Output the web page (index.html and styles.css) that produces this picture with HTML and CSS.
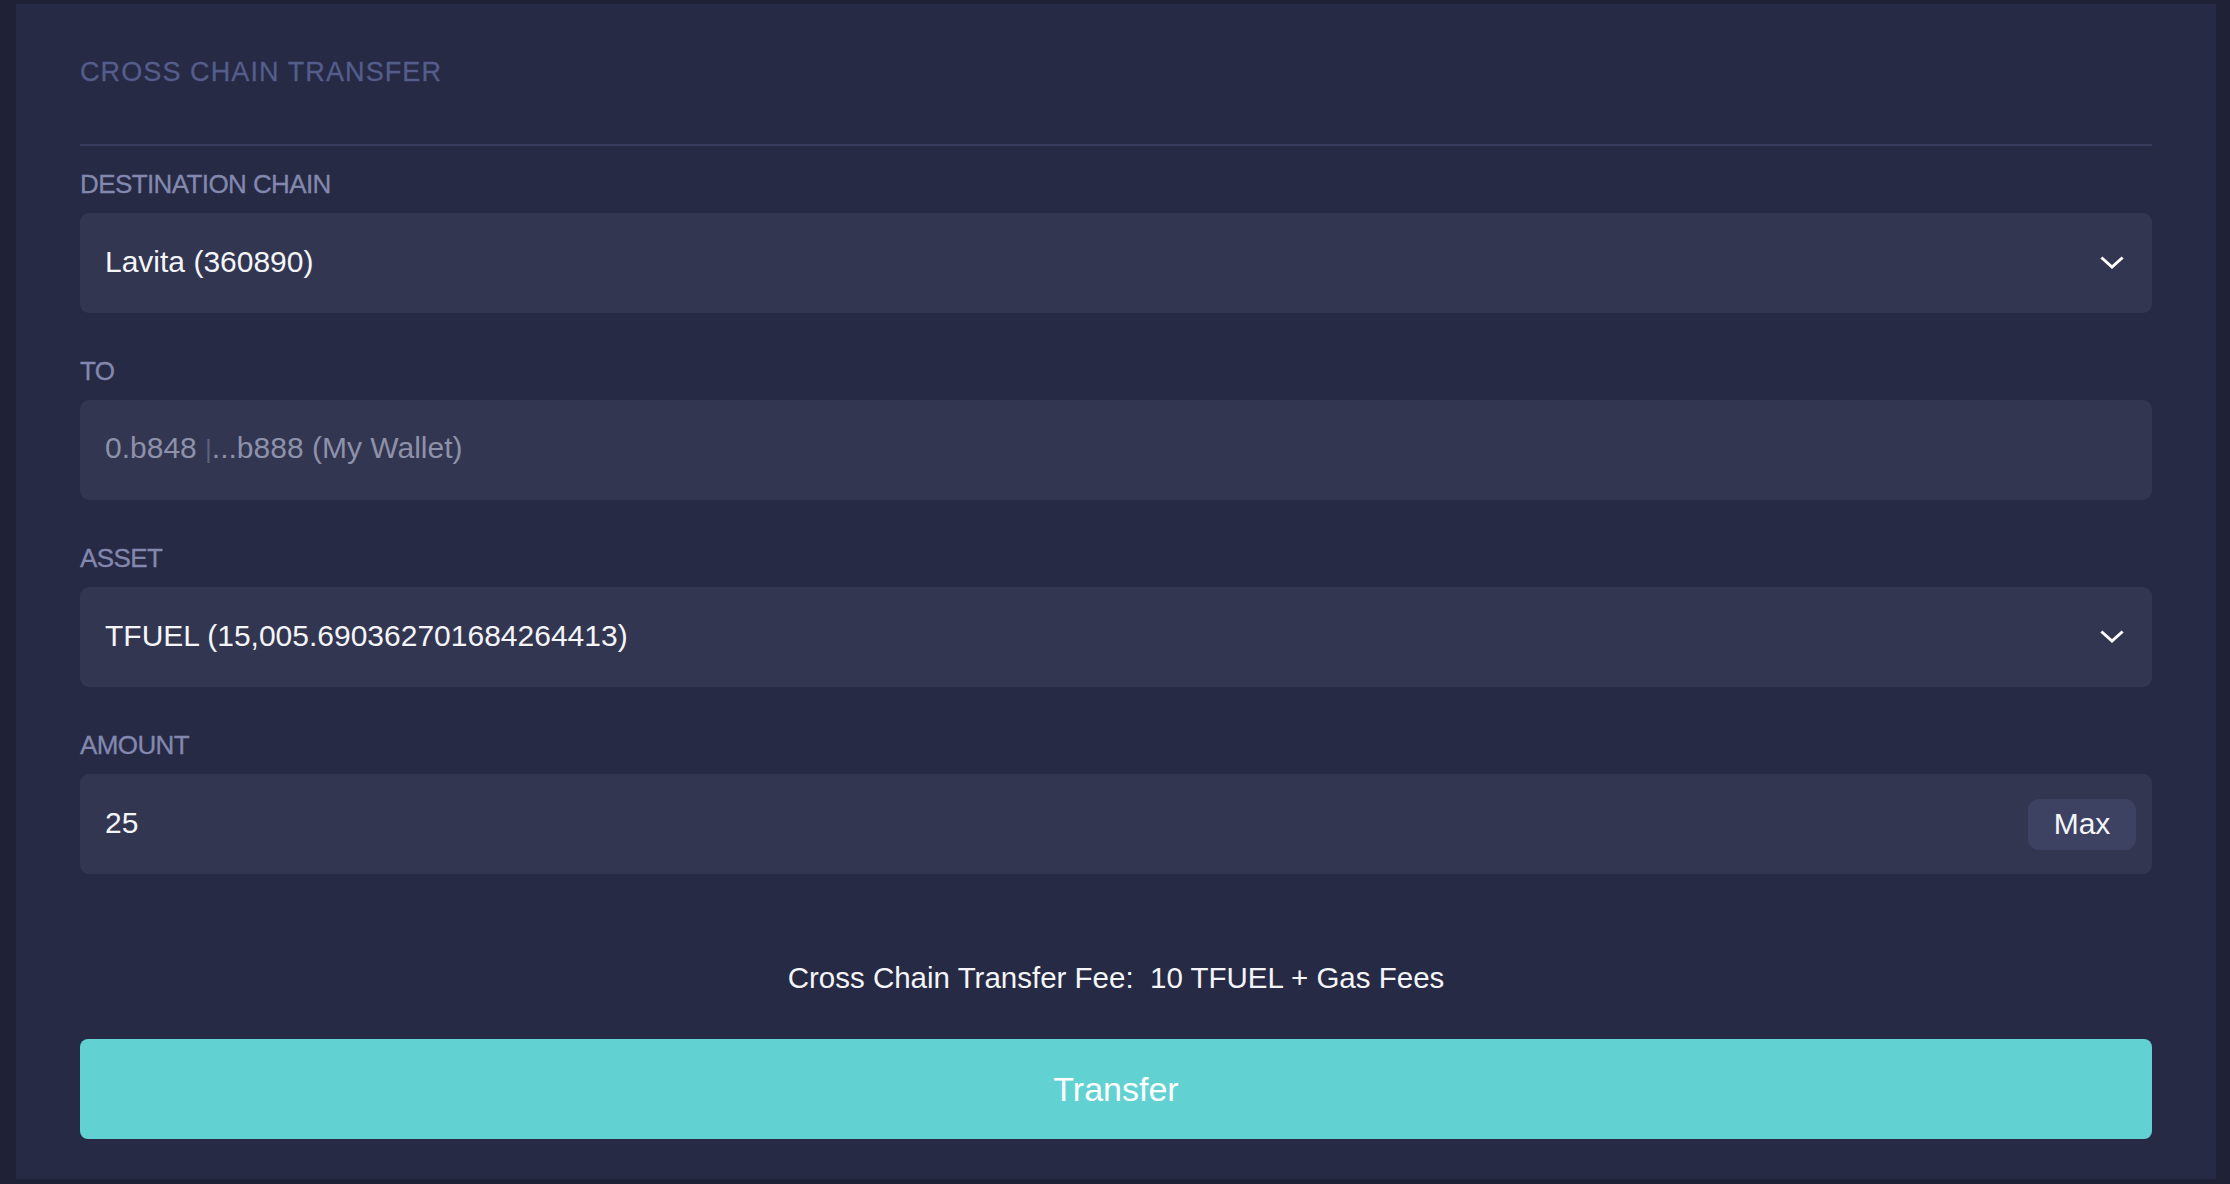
FILE: index.html
```html
<!DOCTYPE html>
<html>
<head>
<meta charset="utf-8">
<link rel="stylesheet" href="styles.css">
</head>
<body>
<div class="panel">
  <div class="title">CROSS CHAIN TRANSFER</div>
  <div class="divider"></div>

  <div class="field">
    <div class="label">DESTINATION CHAIN</div>
    <div class="box">
      <span class="value">Lavita (360890)</span>
      <svg class="chevron" width="24" height="14" viewBox="0 0 24 14"><path d="M2.5 2.5 L12 11 L21.5 2.5" fill="none" stroke="#ffffff" stroke-width="3" stroke-linecap="square"/></svg>
    </div>
  </div>

  <div class="field">
    <div class="label">TO</div>
    <div class="box">
      <span class="value placeholder">0.b848 <span class="caret">|</span>...b888 (My Wallet)</span>
    </div>
  </div>

  <div class="field">
    <div class="label">ASSET</div>
    <div class="box">
      <span class="value">TFUEL (15,005.690362701684264413)</span>
      <svg class="chevron" width="24" height="14" viewBox="0 0 24 14"><path d="M2.5 2.5 L12 11 L21.5 2.5" fill="none" stroke="#ffffff" stroke-width="3" stroke-linecap="square"/></svg>
    </div>
  </div>

  <div class="field">
    <div class="label">AMOUNT</div>
    <div class="box amount">
      <span class="value">25</span>
      <span class="max">Max</span>
    </div>
  </div>

  <div class="fee">Cross Chain Transfer Fee:&nbsp; 10 TFUEL + Gas Fees</div>
  <div class="transfer">Transfer</div>
</div>
</body>
</html>
```
FILE: styles.css
```css
html, body {
  margin: 0;
  padding: 0;
}
body {
  background: #1f2237;
  padding: 4px 14px 5px 16px;
  font-family: "Liberation Sans", Arial, sans-serif;
  color: #f4f5f8;
}
.panel {
  background: #262a45;
  padding: 52px 64px 40px 64px;
}
.title {
  font-size: 27px;
  line-height: 32px;
  letter-spacing: 1.1px;
  color: #555d8a;
  -webkit-text-stroke: 0.3px #555d8a;
}
.divider {
  margin-top: 56px;
  height: 2px;
  background: #373c5c;
  margin-bottom: 23px;
}
.field {
  margin-bottom: 43px;
}
.label {
  font-size: 26px;
  line-height: 30px;
  letter-spacing: -0.6px;
  color: #8388ae;
  -webkit-text-stroke: 0.3px #8388ae;
  margin-bottom: 14px;
}
.box {
  height: 100px;
  background: #333651;
  border-radius: 9px;
  display: flex;
  align-items: center;
  justify-content: space-between;
  padding: 0 28px 0 25px;
  box-sizing: border-box;
}
.value {
  font-size: 30px;
  line-height: 36px;
  margin-top: -3px;
  color: #f4f5f8;
}
.placeholder {
  color: #8d91a9;
}
.caret {
  color: #5c6180;
  font-size: 26px;
  font-weight: 300;
  letter-spacing: -6px;
  margin-right: 6px;
}
.chevron {
  display: block;
}
.box.amount {
  padding-right: 16px;
}
.max {
  background: #3e4262;
  border-radius: 11px;
  width: 108px;
  height: 51px;
  display: flex;
  align-items: center;
  justify-content: center;
  font-size: 30px;
  color: #f4f5f8;
}
.fee {
  margin-top: 86px;
  text-align: center;
  font-size: 29.5px;
  line-height: 36px;
  color: #f4f5f8;
}
.transfer {
  margin-top: 43px;
  height: 100px;
  background: #62d1d2;
  border-radius: 8px;
  display: flex;
  align-items: center;
  justify-content: center;
  font-size: 34px;
  color: #ffffff;
}
```
